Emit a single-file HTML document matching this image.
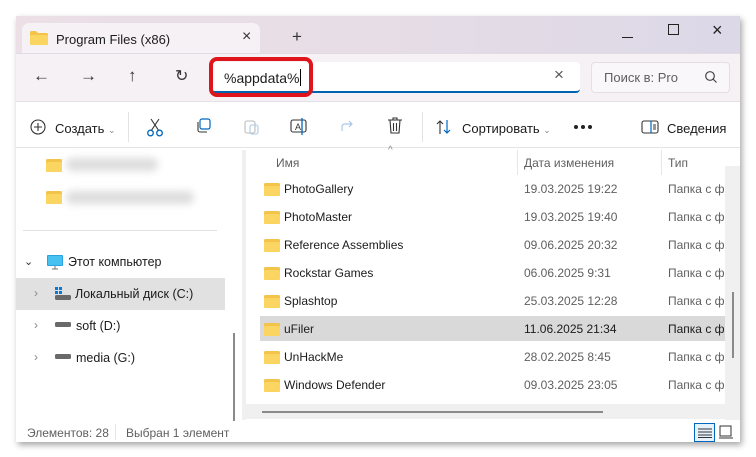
<!DOCTYPE html>
<html><head><meta charset="utf-8"><style>
*{box-sizing:border-box;margin:0;padding:0}
body{width:756px;height:457px;background:#fff;font-family:"Liberation Sans","Noto Sans CJK SC",sans-serif;font-size:12px;color:#1b1b1b;position:relative;overflow:hidden}
.win{position:absolute;left:16px;top:16px;width:724px;height:426px;background:#fff;box-shadow:2px 3px 6px rgba(0,0,0,.35);overflow:hidden}
.title{position:absolute;left:0;top:0;width:724px;height:38px;background:linear-gradient(90deg,#ecdfe6,#e6dde6 50%,#dcd8e7)}
.tab{position:absolute;left:6px;top:7px;width:238px;height:31px;background:#f6f1f4;border-radius:7px 7px 0 0}
.addr{position:absolute;left:0;top:37px;width:724px;height:48px;background:#f5f1f4;border-top:1px solid #e3dbe2}
.tb{position:absolute;left:0;top:85px;width:724px;height:47px;background:#fff;border-top:1px solid #e6e0e6;border-bottom:1px solid #e6e3e6}
.a{position:absolute;white-space:nowrap}
.g{color:#5f5f5f}
svg{position:absolute}
</style></head><body>
<div class="win">
<div class="title"></div>
<div class="tab"></div>
<svg style="left:14px;top:15px" width="18" height="14" viewBox="0 0 18 14"><path d="M0 1.5Q0 0 1.5 0H6l2 2h8.5Q18 2 18 3.5V12.5Q18 14 16.5 14H1.5Q0 14 0 12.5Z" fill="#f3c34a"/><rect x="0" y="4" width="18" height="10" rx="1.5" fill="#fbd561"/></svg>
<div class="a" style="left:40px;top:16px;font-size:13px">Program Files (x86)</div>
<div class="a" style="left:226px;top:12px;font-size:16px;color:#333">×</div>
<div class="a" style="left:276px;top:11px;font-size:17px;color:#333">+</div>
<div class="a" style="left:606px;top:21px;width:11px;height:1.3px;background:#222"></div>
<div class="a" style="left:652px;top:8px;width:11px;height:11px;border:1.3px solid #222"></div>
<div class="a" style="left:696px;top:4px;font-size:18px;color:#222">×</div>
<div class="addr"></div>
<div class="a" style="left:17px;top:50px;font-size:17px;color:#333">←</div>
<div class="a" style="left:64px;top:50px;font-size:17px;color:#333">→</div>
<div class="a" style="left:112px;top:50px;font-size:17px;color:#333">↑</div>
<div class="a" style="left:159px;top:50px;font-size:16px;color:#333">↻</div>
<div class="a" style="left:194px;top:46px;width:370px;height:31px;background:#fff;border-radius:4px;border-bottom:2px solid #0063b1"></div>
<div class="a" style="left:538px;top:49px;font-size:17px;color:#555">×</div>
<div class="a" style="left:575px;top:46px;width:139px;height:31px;background:#f9f7f9;border:1px solid #e4dfe3;border-radius:4px"></div>
<div class="a g" style="left:588px;top:54px;font-size:13px">Поиск в: Pro</div>
<svg style="left:688px;top:54px" width="14" height="14"><circle cx="6" cy="6" r="4.3" fill="none" stroke="#444" stroke-width="1.2"/><path d="M9 9l3.5 3.5" stroke="#444" stroke-width="1.2"/></svg>
<div class="a" style="left:193px;top:41px;width:104px;height:40px;border:4px solid #e0141b;border-radius:8px"></div>
<div class="a" style="left:208px;top:53px;font-size:14px">%appdata%<span style="display:inline-block;width:1px;height:17px;background:#000;vertical-align:-3px"></span></div>
<div class="tb"></div>
<svg style="left:14px;top:103px" width="16" height="16"><circle cx="8" cy="8" r="7" fill="none" stroke="#333" stroke-width="1.1"/><path d="M8 4v8M4 8h8" stroke="#333" stroke-width="1.1"/></svg>
<div class="a" style="left:39px;top:105px;font-size:13px">Создать <span style="font-size:9px;color:#888">⌄</span></div>
<div class="a" style="left:112px;top:96px;width:1px;height:30px;background:#e3e3e3"></div>
<svg style="left:130px;top:101px" width="18" height="20"><path d="M5 2l8 12M13 2L5 14" stroke="#333" stroke-width="1.1"/><circle cx="4.5" cy="16" r="2.8" fill="none" stroke="#0067c0" stroke-width="1.3"/><circle cx="13.5" cy="16" r="2.8" fill="none" stroke="#0067c0" stroke-width="1.3"/></svg>
<svg style="left:179px;top:102px" width="16" height="16"><rect x="5" y="1" width="10" height="10" rx="2" fill="none" stroke="#0067c0" stroke-width="1.2"/><path d="M3 4v8a2 2 0 002 2h7" fill="none" stroke="#333" stroke-width="1.1"/></svg>
<svg style="left:228px;top:102px" width="16" height="17"><rect x="1" y="3" width="10" height="12" rx="2" fill="none" stroke="#bbb" stroke-width="1.1"/><rect x="6" y="7" width="8" height="9" rx="2" fill="none" stroke="#aac8e6" stroke-width="1.1"/></svg>
<svg style="left:274px;top:102px" width="18" height="17"><rect x="1" y="2" width="15" height="12" rx="2" fill="none" stroke="#333" stroke-width="1.1"/><text x="5" y="12" font-size="9" font-family="Liberation Sans" fill="#333">A</text><path d="M12 0v17" stroke="#0067c0" stroke-width="1.3"/></svg>
<svg style="left:324px;top:103px" width="16" height="14"><path d="M2 12V8q0-3 3-3h7M9 2l3 3-3 3" fill="none" stroke="#aac8e6" stroke-width="1.2"/></svg>
<svg style="left:371px;top:101px" width="16" height="18"><path d="M1 3h14M6 3V1h4v2M3 3l1 13h8l1-13M6.5 6v8M9.5 6v8" fill="none" stroke="#333" stroke-width="1.1"/></svg>
<div class="a" style="left:406px;top:96px;width:1px;height:30px;background:#e3e3e3"></div>
<svg style="left:420px;top:103px" width="16" height="16"><path d="M4 15V2M1 5l3-3 3 3" fill="none" stroke="#333" stroke-width="1.1"/><path d="M11 1v13M8 11l3 3 3-3" fill="none" stroke="#0067c0" stroke-width="1.2"/></svg>
<div class="a" style="left:446px;top:105px;font-size:13px">Сортировать <span style="font-size:9px;color:#888">⌄</span></div>
<div class="a" style="left:558px;top:109px;width:4px;height:4px;border-radius:2px;background:#222"></div>
<div class="a" style="left:565px;top:109px;width:4px;height:4px;border-radius:2px;background:#222"></div>
<div class="a" style="left:572px;top:109px;width:4px;height:4px;border-radius:2px;background:#222"></div>
<svg style="left:625px;top:104px" width="18" height="14"><rect x="1" y="1" width="16" height="12" rx="2" fill="none" stroke="#333" stroke-width="1.1"/><path d="M10 1v12" stroke="#0067c0" stroke-width="1.2"/><path d="M12 5h3M12 7h3M12 9h3" stroke="#333"/></svg>
<div class="a" style="left:651px;top:105px;font-size:13px">Сведения</div>

<!-- nav -->
<svg style="left:30px;top:143px" width="16" height="13"><rect width="16" height="13" rx="1.5" fill="#f3c34a"/><rect y="3" width="16" height="10" rx="1.5" fill="#fbd561"/></svg>
<div class="a" style="left:50px;top:142px;width:92px;height:13px;background:#ddd;filter:blur(4px);border-radius:6px"></div>
<svg style="left:30px;top:175px" width="16" height="13"><rect width="16" height="13" rx="1.5" fill="#f3c34a"/><rect y="3" width="16" height="10" rx="1.5" fill="#fbd561"/></svg>
<div class="a" style="left:50px;top:175px;width:128px;height:13px;background:#ddd;filter:blur(4px);border-radius:6px"></div>
<div class="a" style="left:7px;top:214px;width:194px;height:1px;background:#e0e0e0"></div>
<div class="a" style="left:8px;top:239px;font-size:11px;color:#333">⌄</div>
<svg style="left:31px;top:238px" width="16" height="16"><rect x="0" y="1" width="16" height="11" rx="1" fill="#29a3e0"/><rect x="1" y="2" width="14" height="9" fill="#47c1f0"/><path d="M5 15h6M8 12v3" stroke="#777"/></svg>
<div class="a" style="left:52px;top:239px;font-size:12.5px">Этот компьютер</div>
<div class="a" style="left:0;top:262px;width:209px;height:32px;background:#e1e1e1"></div>
<div class="a" style="left:18px;top:270px;font-size:12px;color:#888">›</div>
<svg style="left:39px;top:271px" width="16" height="14"><rect x="0" y="0" width="3" height="3" fill="#0a78d7"/><rect x="4" y="0" width="3" height="3" fill="#0a78d7"/><rect x="0" y="4" width="3" height="3" fill="#0a78d7"/><rect x="4" y="4" width="3" height="3" fill="#0a78d7"/><rect x="0" y="8" width="16" height="5" rx="1.5" fill="#6a6a6a"/></svg>
<div class="a" style="left:59px;top:271px;font-size:12.5px">Локальный диск (C:)</div>
<div class="a" style="left:18px;top:302px;font-size:12px;color:#888">›</div>
<svg style="left:39px;top:306px" width="16" height="6"><rect width="16" height="5" rx="1.5" fill="#6a6a6a"/></svg>
<div class="a" style="left:60px;top:303px;font-size:12.5px">soft (D:)</div>
<div class="a" style="left:18px;top:334px;font-size:12px;color:#888">›</div>
<svg style="left:39px;top:338px" width="16" height="6"><rect width="16" height="5" rx="1.5" fill="#6a6a6a"/></svg>
<div class="a" style="left:60px;top:335px;font-size:12.5px">media (G:)</div>
<div class="a" style="left:217px;top:317px;width:2px;height:88px;background:#8a8a8a"></div>
<div class="a" style="left:226px;top:134px;width:4px;height:270px;background:#f0f0f0"></div>

<!-- list -->
<div class="a" style="left:372px;top:129px;font-size:10px;color:#888">^</div>
<div class="a g" style="left:260px;top:140px">Имя</div>
<div class="a" style="left:501px;top:134px;width:1px;height:25px;background:#e6e6e6"></div>
<div class="a g" style="left:508px;top:140px">Дата изменения</div>
<div class="a" style="left:645px;top:134px;width:1px;height:25px;background:#e6e6e6"></div>
<div class="a g" style="left:652px;top:140px">Тип</div>
<div class="a" style="left:244px;top:300px;width:465px;height:25px;background:#d9d9d9"></div>
<div id="rows"></div>
<div class="a" style="left:230px;top:388px;width:479px;height:15px;background:#f0f0f0"></div>
<div class="a" style="left:246px;top:395px;width:341px;height:2px;background:#8a8a8a"></div>
<div class="a" style="left:709px;top:150px;width:15px;height:254px;background:#f0f0f0"></div>
<div class="a" style="left:716px;top:276px;width:2px;height:66px;background:#8a8a8a"></div>

<div class="a g" style="left:11px;top:410px">Элементов: 28</div>
<div class="a" style="left:99px;top:408px;width:1px;height:16px;background:#e6e6e6"></div>
<div class="a g" style="left:110px;top:410px">Выбран 1 элемент</div>
<div class="a" style="left:678px;top:407px;width:21px;height:19px;border:1px solid #0067c0;background:#e5f1fb"></div>
<svg style="left:682px;top:412px" width="14" height="10"><path d="M0 1h14M0 4h14M0 7h14M0 9.5h14" stroke="#333"/></svg>
<svg style="left:703px;top:409px" width="14" height="14"><rect x="1" y="1" width="11" height="10" fill="none" stroke="#333"/><path d="M0 13h14" stroke="#333"/></svg>
</div>
<script>
var r=[["PhotoGallery","19.03.2025 19:22"],["PhotoMaster","19.03.2025 19:40"],["Reference Assemblies","09.06.2025 20:32"],["Rockstar Games","06.06.2025 9:31"],["Splashtop","25.03.2025 12:28"],["uFiler","11.06.2025 21:34"],["UnHackMe","28.02.2025 8:45"],["Windows Defender","09.03.2025 23:05"]];
var h="";r.forEach(function(x,i){var y=166+i*28;var c=i==5?"#1b1b1b":"#5f5f5f";
h+='<svg style="left:248px;top:'+(y+1)+'px" width="16" height="13"><rect width="16" height="13" rx="1.5" fill="#f3c34a"/><rect y="3" width="16" height="10" rx="1.5" fill="#fbd561"/></svg>';
h+='<div class="a" style="left:268px;top:'+y+'px;font-size:12px">'+x[0]+'</div>';
h+='<div class="a" style="left:508px;top:'+y+'px;color:'+c+'">'+x[1]+'</div>';
h+='<div class="a" style="left:652px;top:'+y+'px;width:57px;overflow:hidden;color:'+c+'">Папка с файлами</div>';});
document.getElementById("rows").outerHTML=h;
</script>
</body></html>
